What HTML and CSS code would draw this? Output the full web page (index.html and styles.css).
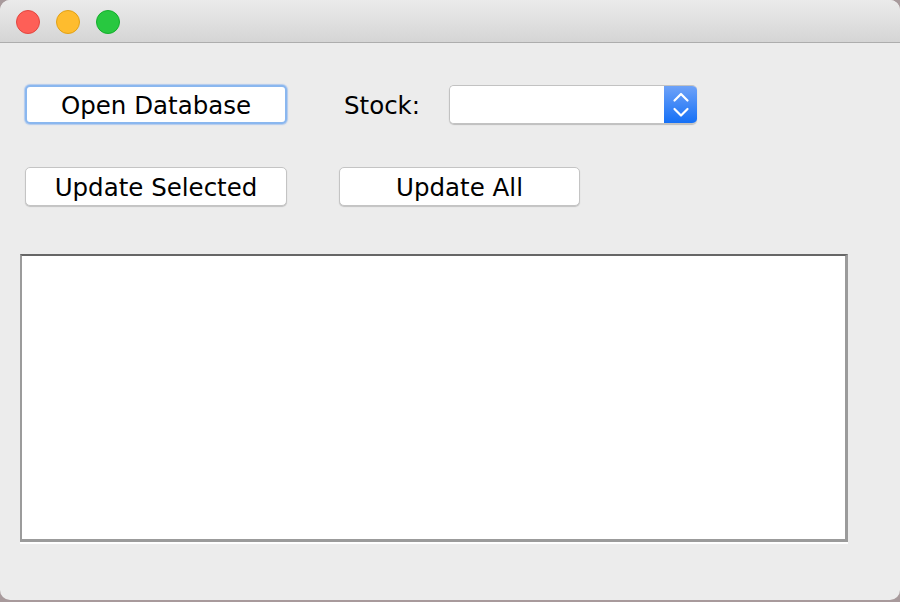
FILE: index.html
```html
<!DOCTYPE html>
<html>
<head>
<meta charset="utf-8">
<link rel="stylesheet" href="styles.css">
</head>
<body>
<div class="window">
  <div class="titlebar">
    <span class="light red"></span>
    <span class="light yellow"></span>
    <span class="light green"></span>
  </div>
  <div class="content">
    <div class="row row1">
      <button class="btn btn-wide focused">Open Database</button>
      <span class="label">Stock:</span>
      <div class="combo">
        <div class="combo-field"></div>
        <div class="combo-arrows">
          <svg width="18" height="26" viewBox="0 0 18 26">
            <path d="M2.5 8.5 L9 2 L15.5 8.5" fill="none" stroke="#fff" stroke-width="2.2" stroke-linecap="round" stroke-linejoin="round"/>
            <path d="M2.5 17 L9 23.5 L15.5 17" fill="none" stroke="#fff" stroke-width="2.2" stroke-linecap="round" stroke-linejoin="round"/>
          </svg>
        </div>
      </div>
    </div>
    <div class="row row2">
      <button class="btn btn-wide">Update Selected</button>
      <button class="btn btn-all">Update All</button>
    </div>
    <div class="textarea"></div>
  </div>
</div>
</body>
</html>
```

FILE: styles.css
```css
html, body {
  margin: 0;
  padding: 0;
}
body {
  width: 900px;
  height: 602px;
  background: #a89a9c;
  overflow: hidden;
  font-family: "DejaVu Sans", "Liberation Sans", sans-serif;
}
.window {
  width: 900px;
  height: 600px;
  background: #ececec;
  border-radius: 10px;
  overflow: hidden;
  display: flex;
  flex-direction: column;
}
.titlebar {
  height: 42px;
  flex: none;
  background: linear-gradient(#ebebeb, #d5d5d5);
  border-bottom: 1px solid #adadad;
  display: flex;
  align-items: center;
  padding-left: 16px;
  gap: 16px;
}
.light {
  width: 24px;
  height: 24px;
  border-radius: 50%;
  box-sizing: border-box;
  margin-top: 1px;
}
.red { background: #fe5f57; border: 1px solid #e2463f; }
.yellow { background: #febc2e; border: 1px solid #e1a116; }
.green { background: #28c840; border: 1px solid #14ae2c; }

.content {
  flex: 1;
  display: flex;
  flex-direction: column;
}
.row {
  display: flex;
  align-items: center;
  height: 39px;
}
.row1 {
  margin-top: 42px;
  margin-left: 25px;
}
.row2 {
  margin-top: 43px;
  margin-left: 25px;
}
.btn {
  box-sizing: border-box;
  height: 39px;
  background: #ffffff;
  border: 1px solid #c4c4c4;
  border-radius: 5px;
  box-shadow: 0 1px 1px rgba(0,0,0,0.18);
  font-family: "DejaVu Sans", "Liberation Sans", sans-serif;
  font-size: 24.5px;
  color: #000;
  padding: 2px 0 0 0;
  margin: 0;
  line-height: 35px;
  text-align: center;
}
.btn-wide { width: 262px; }
.btn-all { width: 241px; margin-left: 52px; }
.focused {
  border: 2px solid #8ab7ef;
  box-shadow: 0 0 1px 1px rgba(120,170,240,0.5);
  line-height: 33px;
}
.label {
  font-size: 24.5px;
  color: #000;
  margin-left: 57px;
  width: 105px;
  padding-top: 2px;
}
.combo {
  width: 248px;
  height: 39px;
  box-sizing: border-box;
  display: flex;
  border-radius: 5px;
  overflow: hidden;
  border: 1px solid #c2c2c2;
  border-right: none;
  box-shadow: 0 1px 1px rgba(0,0,0,0.2);
}
.combo-field {
  flex: 1;
  background: #fff;
}
.combo-arrows {
  width: 33px;
  background: linear-gradient(#6ea2f8, #1570f6);
  display: flex;
  align-items: center;
  justify-content: center;
}
.combo-arrows svg { display: block; }
.textarea {
  margin-top: 48px;
  margin-left: 20px;
  width: 828px;
  height: 288px;
  box-sizing: border-box;
  background: #fff;
  border-top: 2px solid #666;
  border-left: 2px solid #9b9b9b;
  border-right: 3px solid #9b9b9b;
  border-bottom: 3px solid #9b9b9b;
  box-shadow: 0 2px 0 #fff;
}
```
